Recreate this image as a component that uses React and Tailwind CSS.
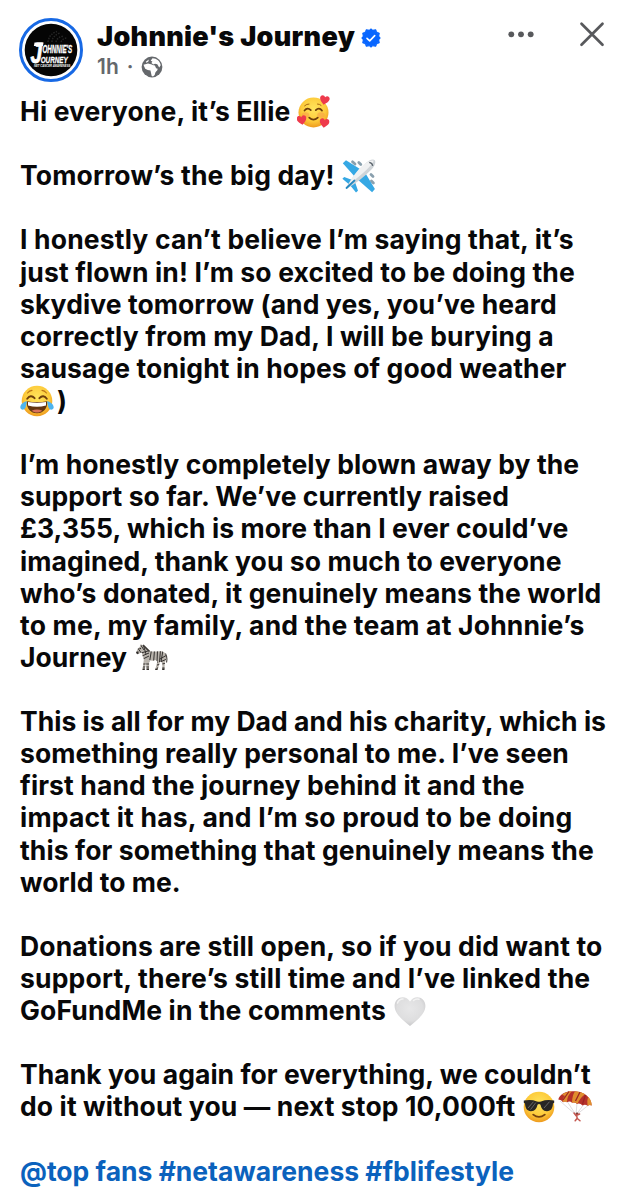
import React from "react";

const FaceGradient = ({ id }) => (
  <radialGradient id={id} cx="50%" cy="38%" r="62%">
    <stop offset="0" stopColor="#ffe45c" />
    <stop offset="0.65" stopColor="#fdcb3b" />
    <stop offset="1" stopColor="#ee9a1e" />
  </radialGradient>
);

const HEART = "M0 4.5C-2.2 2.6-4.8.6-4.8-1.8c0-3.2 3.6-3.8 4.8-1.2 1.2-2.6 4.8-2 4.8 1.2C4.8.6 2.2 2.6 0 4.5Z";

const LovingFace = () => (
  <svg viewBox="0 0 34 34" className="h-[34px] w-[34px] shrink-0">
    <defs><FaceGradient id="loving" /></defs>
    <circle cx="16.5" cy="17.5" r="15" fill="url(#loving)" />
    <ellipse cx="8.5" cy="20" rx="3.8" ry="2.8" fill="#f58a4b" opacity="0.4" />
    <ellipse cx="24" cy="20" rx="3.8" ry="2.8" fill="#f58a4b" opacity="0.4" />
    <path d="M7.5 15.5q3-3.6 6.3-.3M18.8 15.2q3.2-3.2 6.2.4" fill="none" stroke="#6d3d0c" strokeWidth="1.7" strokeLinecap="round" />
    <path d="M7.6 10.8q2.2-2 4.4-1.8M20.5 9q2-.1 3.6 1.4" fill="none" stroke="#a96613" strokeWidth="1" strokeLinecap="round" />
    <path d="M12.2 22.6q4.2 4 8.6 0" fill="none" stroke="#6d3d0c" strokeWidth="1.7" strokeLinecap="round" />
    <g fill="#ee3a4c">
      <path d={HEART} transform="translate(27.5 5.3) rotate(12)" />
      <path d={HEART} transform="translate(4.8 25.3) rotate(-10)" />
      <path d={HEART} transform="translate(27.3 28.3) rotate(8)" />
    </g>
  </svg>
);

const Plane = () => (
  <svg viewBox="0 0 34 34" className="h-[34px] w-[34px] shrink-0">
    <path d="M10.5 2.8 13 5M16.8 3.4l2 2M29 15.6l2 2M29.4 22l2 2" stroke="#8aa0ae" strokeWidth="2.8" strokeLinecap="round" />
    <path d="M22 12.5 4 1.2.8 4.2 13.500 18.500Z" fill="#36a8e4" />
    <path d="M21.800 11.600 32.900 30l-2.800 3.200L15.600 20.500Z" fill="#36a8e4" />
    <path d="M11 21.2 2.2 18 .4 19.8l6.8 5.600ZM13 23l3 8.800-2 1.800-5.500-6.800Z" fill="#36a8e4" />
    <path d="M32.8 1.200c1.500 2.800-.4 6.600-3.600 9.600C22 18 14.500 24.200 5.200 29.500c-.8.3-1.200-.3-.9-1C9.500 19 15.500 12 22.800 5c3.500-3.200 7.800-5.600 10-3.800Z" fill="#cfd4d8" />
    <path d="M31.800 1.800C26-.5 13 12 6.800 25.600 14 20 28.500 9 31.800 1.800Z" fill="#f0f1f2" />
    <path d="M27.200 3.400q3 .5 3.600 3.400" fill="none" stroke="#59636b" strokeWidth="1.3" />
    <path d="m4.500 29 8-7.500" stroke="#2588c0" strokeWidth="1.8" strokeLinecap="round" />
  </svg>
);

const JoyFace = () => (
  <svg viewBox="0 0 34 34" className="h-[34px] w-[34px] shrink-0">
    <defs><FaceGradient id="joy" /></defs>
    <circle cx="17" cy="17" r="15.3" fill="url(#joy)" />
    <path d="M7.2 14.8q3.6-4.8 7.4-.6M19.4 14.2q3.8-4.2 7.4.6" fill="none" stroke="#6d3d0c" strokeWidth="1.9" strokeLinecap="round" />
    <path d="M7.5 9q2-2.4 4.5-2.6M22 6.4Q24.5 6.600 26.500 9" fill="none" stroke="#b97416" strokeWidth="1.1" strokeLinecap="round" />
    <path d="M6.8 17.2q10.200 1.700 20.400 0c.6 7.200-4 12-10.200 12S6.200 24.400 6.800 17.200Z" fill="#62350f" />
    <path d="M8 18q9 1.600 18 0v3.400q-9 2.600-18 0Z" fill="#fff" />
    <path d="M11.600 26.800q5.400-2.600 10.800 0c-3 2.400-7.800 2.400-10.800 0Z" fill="#d9705a" />
    <path d="M6.900 17.200C3 17.800-.2 20.800.4 24c1 2.400 3.900 2.200 5-.2.8-2 1.100-4.300 1.500-6.600ZM27.100 17.200c3.900.6 7.100 3.600 6.500 6.800-1 2.400-3.900 2.200-5-.2-.8-2-1.100-4.300-1.500-6.600Z" fill="#4db4ef" />
  </svg>
);

const Zebra = () => (
  <svg viewBox="0 0 34 34" className="h-[34px] w-[34px] shrink-0">
    <defs>
      <clipPath id="zebra-body">
        <path d="M6 5.5 7 3.3l2 1.5C12.5 6 14.2 9 16 10.3c4 .8 9-.6 12.5.3 3 .8 4 3.400 3.900 6.300l-1.500 4.600-.5 7.500h-2.200l.2-6.500-1.800-2.600-1 2.400-2.200 6.700h-2.300l2.200-8.500-1.800-1.400c-2.500.8-4 .7-6.200 0l-.3 9.900h-2.400l-.6-8.500-1.300 8.500H8.500l1.400-11C8.200 15.300 8.500 13 7.800 11.200L3.800 13.300 2 12 3.500 8Z" />
      </clipPath>
    </defs>
    <g clipPath="url(#zebra-body)">
      <path d="M0 0h34v34H0Z" fill="#b9b4ad" />
      <path d="M6 3l4 6M3 6l5 7M9 3l3 10M7 12l7-2M8 15l7-3M9 18l6-3M17.5 9l-2 12M20.5 9l-1 13M23.5 9l-.5 13M26.5 9l-1 12M29 9l-2 12M26 18l7-4M26 21l7-3M23 24l10-2M23 27h10M8 23h7M8 26h7" stroke="#33302f" strokeWidth="1" />
      <path d="M1 10.5h3.500V14H1ZM7 27.500h25V31H7Z" fill="#302d2b" />
    </g>
    <path d="m9 4 6.500 6.500" stroke="#3d3a37" strokeWidth="1.7" />
    <path d="M31.500 12.500q2.200 4 1 9" fill="none" stroke="#4a4642" strokeWidth="1.1" />
    <circle cx="6.200" cy="7.500" r=".7" fill="#111" />
  </svg>
);

const WhiteHeart = () => (
  <svg viewBox="0 0 34 34" className="h-[34px] w-[34px] shrink-0">
    <defs>
      <radialGradient id="pale-heart" cx="50%" cy="40%" r="60%">
        <stop offset="0" stopColor="#e7e7e8" />
        <stop offset="0.7" stopColor="#dededf" />
        <stop offset="1" stopColor="#c9c9cb" />
      </radialGradient>
    </defs>
    <path d="M17 32C10.5 26.500 1.600 20.300 1.600 11.800 1.600 3.200 12.500-.2 17 7.600 21.500-.2 32.400 3.200 32.400 11.800 32.400 20.300 23.500 26.500 17 32Z" fill="url(#pale-heart)" />
    <path d="M4.500 9q1.500-4.200 5.500-4M20.500 6.500q2.500-2 5.500-1.200" fill="none" stroke="#f3f3f3" strokeWidth="1.5" strokeLinecap="round" />
  </svg>
);

const CoolFace = () => (
  <svg viewBox="0 0 34 34" className="h-[34px] w-[34px] shrink-0">
    <defs><FaceGradient id="cool" /></defs>
    <circle cx="17" cy="17" r="15.3" fill="url(#cool)" />
    <path d="M1.8 10.6Q9 9.200 15 11.400q2 .7 4 0 6-2.200 13.200-.8v2.200l-1.200.8c-.4 5-2 7.600-6 7.600-4.200 0-5.700-2.800-6.500-6.400q-1.500-1.600-3 0c-.8 3.600-2.300 6.400-6.500 6.400-4 0-5.600-2.600-6-7.600l-1.200-.8Z" fill="#292725" />
    <path d="m6 18 5.500-6.300M8.500 19.600l5.300-7M22 18l5.500-6.300" stroke="#666" strokeWidth="1" />
    <path d="M11.200 24.600q5.800 4.600 11.600 0" fill="none" stroke="#76430e" strokeWidth="1.8" strokeLinecap="round" />
  </svg>
);

const Parachute = () => (
  <svg viewBox="0 0 34 34" className="h-[34px] w-[34px] shrink-0">
    <path d="m2 11 16 14L9.500 12M18 25l1-12M18 25 32 14M18 25l8-11" fill="none" stroke="#c9c5c9" strokeWidth=".6" />
    <path d="M.3 9.500C1.500 4 8.500.5 17 1.300 26 2 33 6.500 33.700 15.500q-2-1.300-4.200.3-2.200-1.900-5-.4-2.500-2.600-5.500-1.500Q17 12 14 12.800q-2-2-5-.6-2-1.500-4 0Q3.500 9.900.3 9.500Z" fill="#b5302a" />
    <path d="M4 4.800Q8 1.300 14 1.200q-5 4-5 11-2-1.500-4 0-1-3.200 2-6.200ZM17 1.300q7 .7 10 3-5 3.500-7.500 9.500Q17 12 14 12.800q0-6.800 3-11.500ZM29 6q4.500 3.200 4.700 9.500-2-1.300-4.200.3-.8-4.500.5-8.500Z" fill="#e08e2e" />
    <path d="M11 1.500 5 10M22 2l-4.500 9M27.500 5l-3 9" stroke="#9b2424" strokeWidth="1.3" />
    <circle cx="19" cy="23.800" r="1.4" fill="#7e3d39" />
    <path d="m16 23 2 2.600 3.600-1.600M18.500 25l.8 3.600M19.200 28.200l-2 2.600M19.300 28.500l2.700 2.300" fill="none" stroke="#c4564e" strokeWidth="1.5" strokeLinecap="round" />
  </svg>
);

const Avatar = () => (
  <svg viewBox="0 0 64 64" className="h-16 w-16 shrink-0">
    <circle cx="32" cy="32" r="30.5" fill="#fff" stroke="#1769e5" strokeWidth="3" />
    <circle cx="32" cy="32" r="26.3" fill="#050505" />
    <path d="M29 24q1-8 9-10.5M33 24q0-6 8-9M37 24q1-5 8-6M42 24q2-4 6-4" fill="none" stroke="#262626" strokeWidth="1.5" strokeDasharray="1.5 1.2" />
    <g fill="#fff" fontFamily="Liberation Sans" fontWeight="700" fontStyle="italic">
      <text transform="translate(11.5 45.3) scale(.72 1)" fontSize="29" stroke="#fff" strokeWidth=".8">J</text>
      <path d="M15.500 24.500h9l-.6 3.500h-9Z" />
      <text transform="translate(23.5 34.8) scale(.62 1)" fontSize="10" stroke="#fff" strokeWidth=".3">OHNNIE'S</text>
      <text transform="translate(21.7 44.5) scale(.65 1)" fontSize="9.7" stroke="#fff" strokeWidth=".3">OURNEY</text>
      <text transform="translate(15 49.2) scale(.92 1)" fontSize="3">NET CANCER AWARENESS</text>
    </g>
  </svg>
);

const VerifiedBadge = () => (
  <svg viewBox="0 0 20 20" className="h-5 w-5 shrink-0">
    <g fill="#0866ff">
      <circle cx="10" cy="10" r="8.3" />
      <path d="m10 .2 2.300 2h-4.600ZM10 19.800l2.300-2h-4.600ZM.2 10l2-2.300v4.600ZM19.800 10l-2-2.300v4.600Z" />
      <path d="m5.100 1.500 3 .6-4 2.300ZM14.900 18.500l-3-.6 4-2.300ZM18.500 5.100l-.6 3-2.300-4ZM1.500 14.900l.6-3 2.300 4ZM14.900 1.500l1 2.900-4-2.300ZM5.100 18.500l-1-2.900 4 2.300ZM1.500 5.100l2.900-1-2.300 4ZM18.500 14.900l-2.900 1 2.300-4Z" stroke="#0866ff" strokeWidth=".6" strokeLinejoin="round" />
    </g>
    <path d="m6 10.300 2.700 2.600 5-5.300" fill="none" stroke="#fff" strokeWidth="1.6" strokeLinecap="round" strokeLinejoin="round" />
  </svg>
);

const Globe = () => (
  <svg viewBox="0 0 22 22" className="h-[22px] w-[22px] shrink-0">
    <circle cx="11" cy="11" r="10.4" fill="#65686c" />
    <path d="M11.500 2.200c4.300.2 7.600 3 8.200 7l-1.500 2.200-1.900-3.200-2.300-.5-1.600.9-2-1.500 1-1.600-1.700-.7Z" fill="#fff" />
    <path d="M2.500 8.800 7 7.400l3 .9 2.500 1 1.400.2 1.200 2.700 1.600.5-.4 1.600-1.800 2-.8 2.700-1.700 1.500-1.300-.6-.8-3.300-.4-2.200-2.800-.5-2.500-1.100-1-2.300Z" fill="#fff" />
    <path d="m4.800 5.800 3-2.300-.4 2-2 1.200Z" fill="#fff" />
  </svg>
);

const post = [
  [{ text: "Hi everyone, it’s Ellie", tracking: "tracking-[0.13px]", icon: LovingFace }],
  [{ text: "Tomorrow’s the big day!", tracking: "tracking-[0.15px]", icon: Plane }],
  [
    { text: "I honestly can’t believe I’m saying that, it’s", tracking: "tracking-[0.17px]" },
    { text: "just flown in! I’m so excited to be doing the", tracking: "tracking-[0.14px]" },
    { text: "skydive tomorrow (and yes, you’ve heard", tracking: "tracking-[0.08px]" },
    { text: "correctly from my Dad, I will be burying a", tracking: "tracking-[0.14px]" },
    { text: "sausage tonight in hopes of good weather", tracking: "tracking-[0.1px]" },
    { icon: JoyFace, after: ")" },
  ],
  [
    { text: "I’m honestly completely blown away by the", tracking: "tracking-[0.08px]" },
    { text: "support so far. We’ve currently raised", tracking: "tracking-[0.05px]" },
    { text: "£3,355, which is more than I ever could’ve", tracking: "tracking-[0.07px]" },
    { text: "imagined, thank you so much to everyone", tracking: "tracking-[0.08px]" },
    { text: "who’s donated, it genuinely means the world", tracking: "tracking-[0.12px]" },
    { text: "to me, my family, and the team at Johnnie’s", tracking: "tracking-[0.19px]" },
    { text: "Journey", icon: Zebra },
  ],
  [
    { text: "This is all for my Dad and his charity, which is", tracking: "tracking-[0.02px]" },
    { text: "something really personal to me. I’ve seen", tracking: "tracking-[0.1px]" },
    { text: "first hand the journey behind it and the", tracking: "tracking-[0.12px]" },
    { text: "impact it has, and I’m so proud to be doing", tracking: "tracking-[0.2px]" },
    { text: "this for something that genuinely means the", tracking: "tracking-[0.1px]" },
    { text: "world to me." },
  ],
  [
    { text: "Donations are still open, so if you did want to", tracking: "tracking-[0.13px]" },
    { text: "support, there’s still time and I’ve linked the", tracking: "tracking-[0.19px]" },
    { text: "GoFundMe in the comments", tracking: "tracking-[0.15px]", icon: WhiteHeart },
  ],
  [
    { text: "Thank you again for everything, we couldn’t", tracking: "tracking-[0.05px]" },
    { text: "do it without you — next stop 10,000ft", tracking: "tracking-[0.12px]", icon: CoolFace, icon2: Parachute },
  ],
];

function Line({ line }) {
  const { text, icon: Icon, icon2: Icon2, after, tracking = "" } = line;
  return (
    <div className="flex h-[32.12px] items-center whitespace-nowrap">
      {text && <span className={tracking}>{text}</span>}
      {Icon && <span className={text ? "ml-[7px] pt-[2px]" : "pt-[1px]"}><Icon /></span>}
      {Icon2 && <span className="ml-[2px] pt-[2px]"><Icon2 /></span>}
      {after && <span className="ml-[3px]">{after}</span>}
    </div>
  );
}

export default function App() {
  return (
    <div className="h-[1200px] w-[627px] overflow-hidden bg-white font-['Inter',sans-serif] text-[#080809]">
      {/* Header */}
      <header className="flex h-[95px] items-start pl-[19px] pr-[22px] pt-[18px]">
        <Avatar />
        <div className="ml-[14px] flex-1">
          <div className="flex h-9 items-center">
            <h1 className="mt-[2px] whitespace-nowrap text-[27px] font-black tracking-[0.3px]">Johnnie's Journey</h1>
            <span className="ml-[6px] mt-[4px]"><VerifiedBadge /></span>
          </div>
          <div className="flex h-6 items-center pt-[2px] text-[21px] font-semibold text-[#65686c]">
            <span>1h</span>
            <span className="mx-2">·</span>
            <Globe />
          </div>
        </div>
        <button aria-label="More options" className="mt-[4px] mr-[45px]">
          <svg viewBox="0 0 26 24" className="h-6 w-[26px]" fill="#58595c">
            <circle cx="3.3" cy="12.3" r="2.9" />
            <circle cx="13" cy="12.3" r="2.9" />
            <circle cx="22.7" cy="12.3" r="2.9" />
          </svg>
        </button>
        <button aria-label="Close" className="mt-[3px]">
          <svg viewBox="0 0 26 26" className="h-[26px] w-[26px]">
            <path d="m2.500 2.800 21 21m0-21-21 21" stroke="#58595c" strokeWidth="2.7" strokeLinecap="round" />
          </svg>
        </button>
      </header>

      {/* Post body */}
      <main className="flex flex-col gap-[32.12px] pl-5 text-[26.5px] font-bold leading-[32.12px]">
        {post.map((lines, i) => (
          <div key={i}>
            {lines.map((line, j) => <Line key={j} line={line} />)}
          </div>
        ))}
        <p className="whitespace-nowrap text-[#0b62bd]">@top fans #netawareness #fblifestyle</p>
      </main>
    </div>
  );
}
